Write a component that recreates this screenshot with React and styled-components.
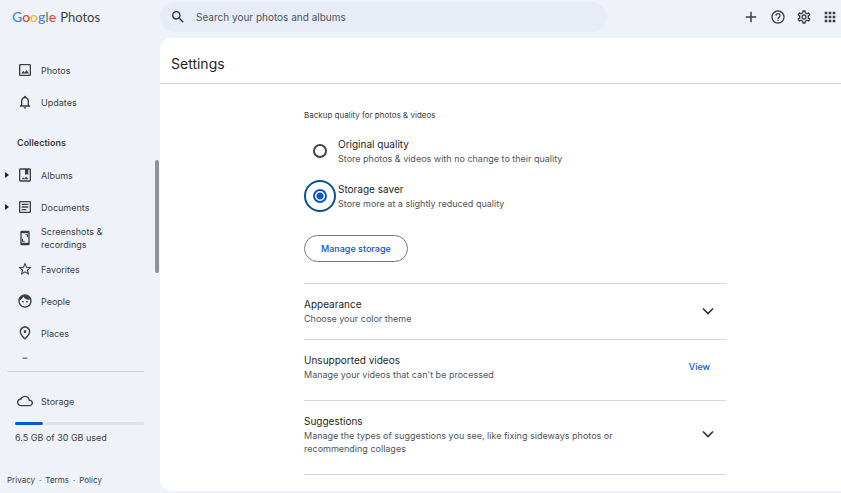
import React from "react";
import styled, { createGlobalStyle } from "styled-components";
import {
  MdAdd,
  MdApps,
  MdCloudQueue,
  MdFace,
  MdHelpOutline,
  MdNotificationsNone,
  MdOutlineArticle,
  MdOutlinePlace,
  MdOutlineSettings,
  MdSearch,
  MdStarBorder,
} from "react-icons/md";

const GlobalStyle = createGlobalStyle`
  * {
    box-sizing: border-box;
  }
  body {
    margin: 0;
    background: #eff3f9;
    color: #3c4043;
    font-family: Inter, "Liberation Sans", sans-serif;
    font-size: 9px;
    line-height: 13px;
  }
  h1, h2, h3, p, fieldset, legend {
    margin: 0;
    padding: 0;
    border: 0;
    font-weight: 400;
  }
  a {
    color: inherit;
    text-decoration: none;
  }
  button {
    font: inherit;
    color: inherit;
    background: none;
    border: 0;
    padding: 0;
    cursor: pointer;
  }
  svg {
    display: block;
    flex-shrink: 0;
  }
`;

const Page = styled.div`
  display: grid;
  grid-template-columns: 160px minmax(0, 1fr);
  grid-template-rows: 38px minmax(0, 1fr);
  height: 100vh;
  overflow: hidden;
`;

const Logo = styled.a`
  display: flex;
  align-items: center;
  gap: 4px;
  padding: 0 0 4px 12px;
  font-family: Lato, sans-serif;
  font-size: 14px;
  line-height: 18px;
`;

const Letter = styled.span`
  color: ${(props) => props.$color};
  font-weight: 500;
`;

const LogoName = styled.span`
  font-size: 13px;
`;

const TopBar = styled.header`
  display: flex;
  align-items: center;
  justify-content: space-between;
  padding: 0 3px 4px 0;
`;

const SearchBox = styled.label`
  display: flex;
  align-items: center;
  gap: 10px;
  width: 66%;
  height: 30px;
  padding: 0 10px;
  border-radius: 15px;
  background: #e7ecf7;
  color: #303438;
`;

const SearchInput = styled.input`
  flex: 1;
  min-width: 0;
  padding: 0;
  border: 0;
  outline: 0;
  background: none;
  font: inherit;
  font-size: 10px;
  &::placeholder {
    color: #50555a;
    opacity: 1;
  }
`;

const Actions = styled.div`
  display: flex;
  align-items: center;
  gap: 10px;
  color: #3c4043;
`;

const Sidebar = styled.aside`
  position: relative;
  display: flex;
  flex-direction: column;
  min-height: 0;
`;

const Nav = styled.nav`
  flex: 1;
  min-height: 0;
  padding-top: 16px;
  overflow: hidden;
`;

const NavRow = styled.a`
  display: flex;
  align-items: center;
  height: ${(props) => (props.$compact ? 30 : 32)}px;
  padding-left: 5px;
  padding-right: 40px;
`;

const NavArrow = styled.span`
  width: 12px;
  &::before {
    content: "";
    display: ${(props) => (props.$shown ? "block" : "none")};
    width: 0;
    border: 3px solid transparent;
    border-left: 4px solid #202124;
    border-right: 0;
  }
`;

const NavText = styled.span`
  flex: 1;
  margin-left: 8px;
`;

const NavHeading = styled.h2`
  padding: 18px 0 10px 17px;
  font-size: 9px;
  font-weight: 600;
`;

const ScrollThumb = styled.div`
  position: absolute;
  top: 122px;
  right: 1px;
  width: 4px;
  height: 113px;
  border-radius: 2px;
  background: #919497;
`;

const Storage = styled.section`
  margin: 0 16px 0 7px;
  padding: 13px 0 30px;
  border-top: 1px solid #d0d4da;
`;

const StorageLink = styled.a`
  display: flex;
  align-items: center;
  gap: 8px;
  height: 32px;
  padding-left: 10px;
`;

const StorageMeter = styled.div`
  display: flex;
  gap: 2px;
  height: 3px;
  margin: 5px 0 6px 8px;
`;

const MeterPart = styled.span`
  border-radius: 2px;
  background: ${(props) => (props.$used ? "#0b57d0" : "#dde1e8")};
`;

const StorageText = styled.p`
  padding-left: 8px;
`;

const Legal = styled.footer`
  display: flex;
  gap: 4px;
  padding: 0 0 6px 7px;
  font-size: 8px;
`;

const Panel = styled.main`
  margin-bottom: 2px;
  border-radius: 12px 0 0 12px;
  background: #fff;
  overflow: hidden;
`;

const Title = styled.h1`
  padding: 14px 11px 7px;
  border-bottom: 1px solid #d3d5d8;
  color: #1f1f1f;
  font-size: 14px;
  line-height: 24px;
`;

const Content = styled.div`
  padding: 25px 115px 0 144px;
`;

const Quality = styled.fieldset`
  display: grid;
  gap: 16px;
`;

const QualityLegend = styled.legend`
  margin-bottom: 14px;
  font-size: 8px;
`;

const Option = styled.label`
  display: flex;
  align-items: center;
  gap: 11px;
  padding-left: 9px;
`;

const Radio = styled.input`
  appearance: none;
  flex-shrink: 0;
  width: 14px;
  height: 14px;
  margin: 0;
  border: 2px solid #444746;
  border-radius: 50%;
  &:checked {
    border-color: #0b57d0;
    background: radial-gradient(#0b57d0 3px, #fff 4px);
    outline: 2px solid #0b5394;
    outline-offset: 7px;
  }
`;

const ItemTitle = styled.h3`
  color: #1f1f1f;
  font-size: 10px;
  line-height: 16px;
`;

const ItemText = styled.p`
  max-width: 310px;
  color: #50555a;
`;

const ManageButton = styled.button`
  height: 27px;
  margin: 25px 0 21px;
  padding: 0 16px;
  border: 1px solid #747775;
  border-radius: 14px;
  color: #0b57d0;
  font-weight: 500;
`;

const Setting = styled.section`
  display: flex;
  align-items: center;
  justify-content: space-between;
  padding: 12px 11px ${(props) => (props.$roomy ? 19 : 14)}px 0;
  border-top: 1px solid #d3d5d8;
`;

const ViewButton = styled.button`
  padding-right: 5px;
  color: #0b57d0;
  font-weight: 500;
`;

const PhotoIcon = () => (
  <svg width="16" height="16" viewBox="0 0 24 24" fill="currentColor">
    <path d="M19 5v14H5V5h14m0-2H5a2 2 0 0 0-2 2v14a2 2 0 0 0 2 2h14a2 2 0 0 0 2-2V5a2 2 0 0 0-2-2z" />
    <path d="M6.5 17.2l3-4 2.2 2.6 2.8-3.8 3.5 5.2z" />
  </svg>
);

const AlbumIcon = () => (
  <svg width="16" height="16" viewBox="0 0 24 24" fill="currentColor">
    <path d="M19 2H5a2 2 0 0 0-2 2v16a2 2 0 0 0 2 2h14a2 2 0 0 0 2-2V4a2 2 0 0 0-2-2zm0 18H5V4h7v8l2.5-1.5L17 12V4h2v16z" />
    <path d="M7 18.5l2.3-3 1.7 2 2.5-3.2 3.5 4.2z" />
  </svg>
);

const ScreenshotIcon = () => (
  <svg width="16" height="16" viewBox="0 0 24 24" fill="currentColor">
    <path d="M17 1H7a2 2 0 0 0-2 2v18a2 2 0 0 0 2 2h10a2 2 0 0 0 2-2V3a2 2 0 0 0-2-2zm0 18H7V5h10v14z" />
    <path d="M12.5 8H15v3h1.5V6.5h-4zM9 16v-3H7.5v4.5h4V16z" />
  </svg>
);

const MinusIcon = () => (
  <svg width="16" height="16" viewBox="0 0 24 24" fill="currentColor">
    <path d="M8.5 1h7v1.5h-7z" />
  </svg>
);

const ChevronIcon = () => (
  <svg width="14" height="14" viewBox="0 0 14 14" fill="none" stroke="#303438" strokeWidth="1.7">
    <path d="M2 4.5l5 5 5-5" />
  </svg>
);

const NavItem = ({ icon, arrow, compact, children }) => (
  <NavRow href="#" $compact={compact}>
    <NavArrow $shown={arrow} />
    {icon}
    <NavText>{children}</NavText>
  </NavRow>
);

const google = [
  ["G", "#4285f4"],
  ["o", "#ea4335"],
  ["o", "#fbbc04"],
  ["g", "#4285f4"],
  ["l", "#34a853"],
  ["e", "#ea4335"],
];

const App = () => {
  return (
    <>
      <GlobalStyle />
      <Page>
        <Logo href="#">
          <span>
            {google.map(([letter, color], i) => (
              <Letter key={i} $color={color}>
                {letter}
              </Letter>
            ))}
          </span>
          <LogoName>Photos</LogoName>
        </Logo>

        <TopBar>
          <SearchBox>
            <MdSearch size={16} />
            <SearchInput
              type="search"
              aria-label="Search"
              placeholder="Search your photos and albums"
            />
          </SearchBox>
          <Actions>
            <button aria-label="Create">
              <MdAdd size={18} />
            </button>
            <button aria-label="Help">
              <MdHelpOutline size={16} />
            </button>
            <button aria-label="Settings">
              <MdOutlineSettings size={16} />
            </button>
            <button aria-label="Apps">
              <MdApps size={16} />
            </button>
          </Actions>
        </TopBar>

        <Sidebar>
          <Nav>
            <NavItem icon={<PhotoIcon />}>Photos</NavItem>
            <NavItem icon={<MdNotificationsNone size={16} />}>Updates</NavItem>
            <NavHeading>Collections</NavHeading>
            <NavItem arrow icon={<AlbumIcon />}>
              Albums
            </NavItem>
            <NavItem arrow icon={<MdOutlineArticle size={16} />}>
              Documents
            </NavItem>
            <NavItem compact icon={<ScreenshotIcon />}>
              Screenshots & recordings
            </NavItem>
            <NavItem icon={<MdStarBorder size={16} />}>Favorites</NavItem>
            <NavItem icon={<MdFace size={16} />}>People</NavItem>
            <NavItem icon={<MdOutlinePlace size={16} />}>Places</NavItem>
            <NavItem icon={<MinusIcon />} />
          </Nav>
          <ScrollThumb />
          <Storage>
            <StorageLink href="#">
              <MdCloudQueue size={16} />
              Storage
            </StorageLink>
            <StorageMeter>
              <MeterPart $used style={{ flex: 6.5 }} />
              <MeterPart style={{ flex: 23.5 }} />
            </StorageMeter>
            <StorageText>6.5 GB of 30 GB used</StorageText>
          </Storage>
          <Legal>
            <a href="#">Privacy</a>·<a href="#">Terms</a>·<a href="#">Policy</a>
          </Legal>
        </Sidebar>

        <Panel>
          <Title>Settings</Title>
          <Content>
            <Quality>
              <QualityLegend>Backup quality for photos & videos</QualityLegend>
              <Option>
                <Radio type="radio" name="quality" />
                <div>
                  <ItemTitle>Original quality</ItemTitle>
                  <ItemText>
                    Store photos & videos with no change to their quality
                  </ItemText>
                </div>
              </Option>
              <Option>
                <Radio type="radio" name="quality" defaultChecked />
                <div>
                  <ItemTitle>Storage saver</ItemTitle>
                  <ItemText>Store more at a slightly reduced quality</ItemText>
                </div>
              </Option>
            </Quality>
            <ManageButton>Manage storage</ManageButton>

            <Setting>
              <div>
                <ItemTitle>Appearance</ItemTitle>
                <ItemText>Choose your color theme</ItemText>
              </div>
              <button aria-label="Expand appearance">
                <ChevronIcon />
              </button>
            </Setting>
            <Setting $roomy>
              <div>
                <ItemTitle>Unsupported videos</ItemTitle>
                <ItemText>Manage your videos that can't be processed</ItemText>
              </div>
              <ViewButton>View</ViewButton>
            </Setting>
            <Setting $roomy>
              <div>
                <ItemTitle>Suggestions</ItemTitle>
                <ItemText>
                  Manage the types of suggestions you see, like fixing sideways
                  photos or recommending collages
                </ItemText>
              </div>
              <button aria-label="Expand suggestions">
                <ChevronIcon />
              </button>
            </Setting>
            <Setting>
              <ItemTitle>Group similar faces</ItemTitle>
            </Setting>
          </Content>
        </Panel>
      </Page>
    </>
  );
};

export default App;
